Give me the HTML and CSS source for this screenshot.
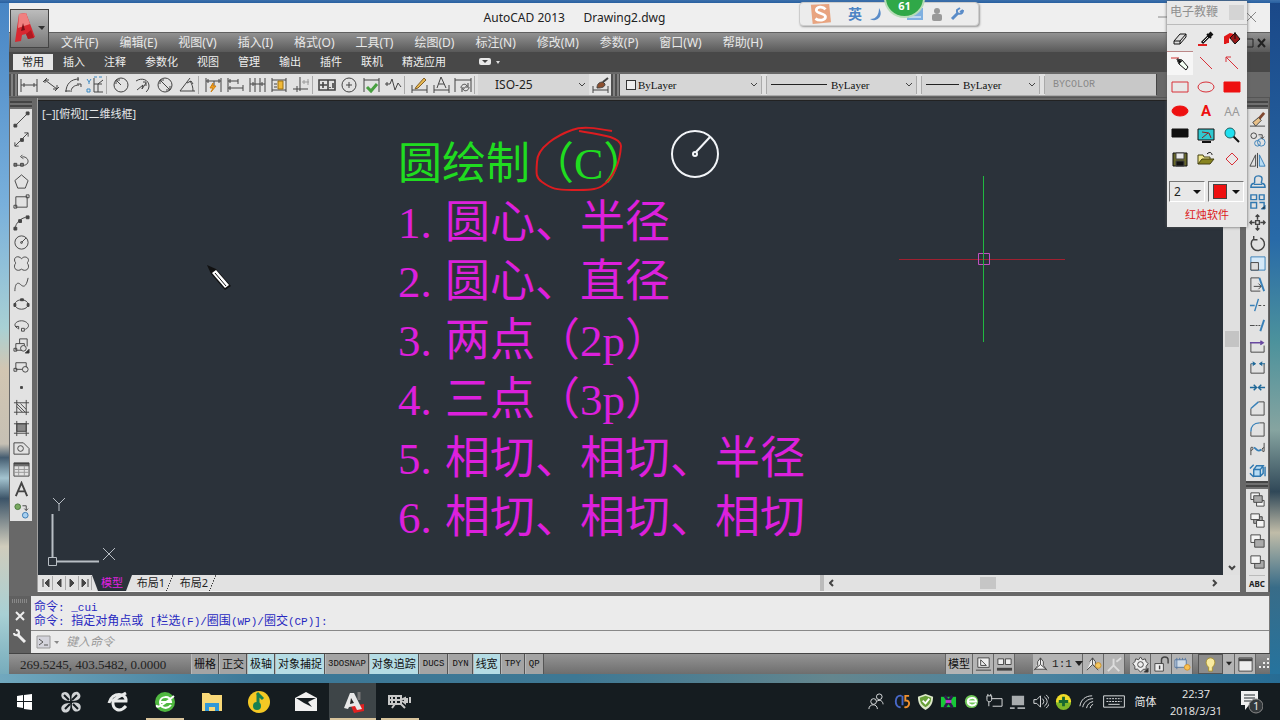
FILE: index.html
```html
<!DOCTYPE html>
<html lang="zh-CN">
<head>
<meta charset="utf-8">
<title>AutoCAD 2013 - Drawing2.dwg</title>
<link rel="stylesheet" href="styles.css">
</head>
<body>
<main class="desktop">
<section class="window">
  <header class="titlebar"><h1>AutoCAD 2013 &nbsp; &nbsp; &nbsp;Drawing2.dwg</h1>
    <div class="winbtns"><button aria-label="最小化"><svg width="12" height="12"><path d="M1 6h10"/></svg></button><button aria-label="关闭"><svg width="12" height="12"><path d="M1 1l10 10M11 1L1 11"/></svg></button></div>
  </header>
  <nav class="menubar" aria-label="菜单">
    <button>文件(F)</button><button>编辑(E)</button><button>视图(V)</button><button>插入(I)</button><button>格式(O)</button><button>工具(T)</button><button>绘图(D)</button><button>标注(N)</button><button>修改(M)</button><button>参数(P)</button><button>窗口(W)</button><button>帮助(H)</button>
    <div class="docbtns"><button aria-label="还原"><svg width="10" height="10"><path d="M1 1h8v8H1z"/></svg></button><button aria-label="关闭文档"><svg width="10" height="10"><path d="M1 1l7 8M8 1L1 9" stroke-width="2"/></svg></button></div>
  </nav>
  <button class="appbtn" aria-label="应用程序菜单"><svg width="37" height="37" viewBox="0 0 37 37"><path d="M8 4l7-1 9 24-7 2-2-5-4 1-1 6-6 1z" fill="#d82830"/><path d="M8 4l7-1 4 11-12 4z" fill="#f08080"/><path d="M12 13l2 7-4 1z" fill="#7c1018"/><path d="M20 20l3 8-6 1-2-5z" fill="#b01820"/><path d="M27 16h7l-3 4z" fill="#333"/></svg></button>
  <nav class="ribbon" aria-label="功能区">
    <button class="on">常用</button><button>插入</button><button>注释</button><button>参数化</button><button>视图</button><button>管理</button><button>输出</button><button>插件</button><button>联机</button><button>精选应用</button>
    <button class="more" aria-label="最小化功能区"><svg width="24" height="10"><rect x="1" y="1" width="12" height="7" rx="2" fill="#e8e8e8"/><path d="M4 3h6l-3 3z" fill="#444"/><path d="M18 4h4l-2 3z" fill="#ddd"/></svg></button>
  </nav>

  <div class="toolrow">
    <div class="grip"></div>
    <div class="bar">
      <button aria-label="线性"><svg viewBox="0 0 18 18"><path d="M1 3v13M17 3v13M1 9h16M4 7v4M14 7v4"/></svg></button>
      <button aria-label="对齐"><svg viewBox="0 0 18 18"><path d="M1 6l4-4M13 15l4-4M3 4l12 9M3 7V4h4M15 9v4h-4"/></svg></button>
      <button aria-label="弧长"><svg viewBox="0 0 18 18"><path d="M2 16C2 8 7 3 15 3M7 16c0-4 3-7 8-7M14 1v4M13 8h4v3M1 15h5"/></svg></button>
      <button aria-label="坐标"><svg viewBox="0 0 18 18"><path d="M8 2v14h9M12 8l5-4M12 8v8M8 8h8"/><path d="M1 3l2 3 2-3M3 6v2M8 1h3M13 1h3M1 13h3v3H1z" stroke="#3b8ac4"/></svg></button>
      <i class="sep"></i>
      <button aria-label="半径"><svg viewBox="0 0 18 18"><circle cx="9" cy="9" r="7"/><path d="M9 9L5 5M4 8V4h4"/></svg></button>
      <button aria-label="折弯"><svg viewBox="0 0 18 18"><path d="M2 5c6-4 13-1 13 5 0 3-2 5-3 6M3 14l6-5-1 4 4-6M9 6h3v4"/></svg></button>
      <button aria-label="直径"><svg viewBox="0 0 18 18"><circle cx="9" cy="9" r="7"/><path d="M4 4l10 10M4 8V4h4M14 10v4h-4"/></svg></button>
      <button aria-label="角度"><svg viewBox="0 0 18 18"><path d="M12 2L2 15h15M12 5c2 3 3 6 3 10M9 7l4-2 2 3"/></svg></button>
      <i class="sep"></i>
      <button aria-label="快速标注"><svg viewBox="0 0 18 18"><path d="M2 2v14M17 2v14M2 5h15M10 5v5M4 3v4M15 3v4"/><path d="M9 7L6 12h3l-2 4 5-6H9z" fill="#f0a020" stroke="#d08010"/></svg></button>
      <button aria-label="基线"><svg viewBox="0 0 18 18"><path d="M2 2v14M12 3v5M2 5h10M2 12h15M17 9v6M4 3v4M4 10v4"/></svg></button>
      <button aria-label="连续"><svg viewBox="0 0 18 18"><path d="M2 2v14M7 2v14M12 2v14M17 2v14M2 8h15M5 6v4M14 6v4"/></svg></button>
      <button aria-label="间距"><svg viewBox="0 0 18 18"><path d="M2 2v14M16 2v14M2 4h14M2 14h14M4 8h3M4 11h3"/><path d="M8 5h5v8H8z" fill="#f0b838" stroke="#9c7010"/></svg></button>
      <button aria-label="打断"><svg viewBox="0 0 18 18"><path d="M8 1v14M1 13h15M5 10v6"/><path d="M10 6h7M16 3v6M12 4v4" stroke="#999"/></svg></button>
      <i class="sep"></i>
      <button aria-label="公差"><svg viewBox="0 0 18 18"><path d="M1 4h16v10H1zM10 4v10M2 9h7M5 6v6M15 7v5M12 11v1" stroke-width="1.6"/></svg></button>
      <button aria-label="圆心标记"><svg viewBox="0 0 18 18"><circle cx="9" cy="9" r="7"/><path d="M6 9h6M9 6v6"/></svg></button>
      <button aria-label="检验"><svg viewBox="0 0 18 18"><path d="M2 2v14M17 2v14M2 4h15"/><path d="M5 11l4 4 6-7" stroke="#48a040" stroke-width="3"/></svg></button>
      <button aria-label="折弯线性"><svg viewBox="0 0 18 18"><path d="M1 8h5l2-5 3 11 3-7 3 4M3 6v4"/></svg></button>
      <i class="sep"></i>
      <button aria-label="编辑标注"><svg viewBox="0 0 18 18"><path d="M2 9v8M17 9v8M2 14h15"/><path d="M6 11l8-9 2 2-8 8-3 1z" fill="#e8b850" stroke="#80602c"/></svg></button>
      <button aria-label="编辑文字"><svg viewBox="0 0 18 18"><path d="M2 9v8M17 9v8M2 14h15M5 12l4-11 5 11M7 8h5"/></svg></button>
      <button aria-label="标注更新"><svg viewBox="0 0 18 18"><path d="M1 2v14M17 2v14M1 4h16M7 12c0-4 5-5 6-2M15 11c0 4-5 5-6 2M14 7v4h-3M8 16v-4h3"/></svg></button>
      <i class="sep"></i>
      <label class="combo style"><select aria-label="标注样式"><option>ISO-25</option></select><svg class="chev" viewBox="0 0 8 6"><path d="M1 1l3 3 3-3"/></svg></label>
      <button aria-label="标注样式管理"><svg viewBox="0 0 18 18"><path d="M2 10v7M17 10v7M2 14h15"/><path d="M6 12c0-4 2-6 6-6l2 2c0 3-3 4-8 4z" fill="#8c5030"/><path d="M12 6l5-4" stroke-width="2"/></svg></button>
    </div>
    <div class="grip"></div>
    <div class="bar props">
      <label class="combo color"><span class="swatch"></span><select aria-label="颜色"><option>ByLayer</option></select><svg class="chev" viewBox="0 0 8 6"><path d="M1 1l3 3 3-3"/></svg></label><i class="sep"></i>
      <label class="combo ltype"><span class="rule"></span><select aria-label="线型"><option>ByLayer</option></select><svg class="chev" viewBox="0 0 8 6"><path d="M1 1l3 3 3-3"/></svg></label><i class="sep"></i>
      <label class="combo lweight"><span class="rule"></span><select aria-label="线宽"><option>ByLayer</option></select><svg class="chev" viewBox="0 0 8 6"><path d="M1 1l3 3 3-3"/></svg></label><i class="sep"></i>
      <label class="combo plot"><select aria-label="打印样式" disabled><option>BYCOLOR</option></select></label>
    </div>
  </div>

  <div class="work">
    <aside class="side">
      <div class="hgrip"></div>
      <div class="vbar draw">
        <button aria-label="直线"><svg viewBox="0 0 18 18"><path d="M3 15L15 3"/><path d="M1 14h3v3H1zM14 1h3v3h-3z" fill="#444"/></svg></button>
        <button aria-label="构造线"><svg viewBox="0 0 18 18"><path d="M2 16L16 2M2 12v4h4M12 2h4v4"/><path d="M8 8h3v3H8z" fill="#444"/></svg></button>
        <button aria-label="多段线"><svg viewBox="0 0 18 18"><path d="M2 14h10c6-1 5-9-2-9M10 3L8 5l3 2"/><path d="M1 12h3v3H1zM8 12h3v3H8z" fill="#777"/></svg></button>
        <button aria-label="正多边形"><svg viewBox="0 0 18 18"><path d="M9 2l7 6-3 8H5L2 8z"/></svg></button>
        <button aria-label="矩形"><svg viewBox="0 0 18 18"><path d="M3 4h12v11H3z"/><path d="M1 13h3v3H1zM14 2h3v3h-3z"/></svg></button>
        <button aria-label="圆弧"><svg viewBox="0 0 18 18"><path d="M2 16C3 9 8 4 16 3"/><path d="M1 14h3v3H1zM6 6h3v3H6zM14 2h3v3h-3z" fill="#444"/></svg></button>
        <button aria-label="圆"><svg viewBox="0 0 18 18"><circle cx="9" cy="9" r="7"/><circle cx="9" cy="9" r="1"/><path d="M9 9l5-5"/></svg></button>
        <button aria-label="修订云线"><svg viewBox="0 0 18 18"><path d="M9 4c3-4 9-1 7 3-1 1-1 2 0 3 2 5-3 8-7 5-4 3-9 0-7-5 1-1 1-2 0-3-2-5 4-7 7-3z"/></svg></button>
        <button aria-label="样条曲线"><svg viewBox="0 0 18 18"><path d="M2 16C2 8 5 6 8 9s6 3 8-7"/></svg></button>
        <button aria-label="椭圆"><svg viewBox="0 0 18 18"><ellipse cx="9" cy="9" rx="7" ry="5"/><path d="M8 3h3v2H8zM1 8h2v3H1zM15 8h2v3h-2z" fill="#444"/></svg></button>
        <button aria-label="椭圆弧"><svg viewBox="0 0 18 18"><path d="M5 12C-1 9 3 4 9 4s11 6 4 9M3 10h3v3M9 12h3v3H9z"/></svg></button>
        <button aria-label="插入块"><svg viewBox="0 0 18 18"><path d="M7 2h8v8M3 7h9v7H3zM7 2v5"/><circle cx="11" cy="12" r="3" fill="#ddd"/><path d="M17 17h-4l4-4z" fill="#222"/><path d="M1 12h3v3H1z"/></svg></button>
        <button aria-label="创建块"><svg viewBox="0 0 18 18"><path d="M3 12V5h11v5M3 12h7"/><circle cx="13" cy="12" r="3"/><path d="M1 11h3v3H1z"/></svg></button>
        <button aria-label="点"><svg viewBox="0 0 18 18"><path d="M8 8h2v2H8z" fill="#444"/></svg></button>
        <button aria-label="图案填充"><svg viewBox="0 0 18 18"><path d="M4 1v16M14 1v16M1 4h16M1 14h16M4 8l6 6M4 5l9 9M8 5l6 6"/></svg></button>
        <button aria-label="渐变色"><svg viewBox="0 0 18 18"><path d="M4 4h10v8H4z" fill="#888"/><path d="M4 1v16M14 1v16M1 4h16M1 14h16"/></svg></button>
        <button aria-label="面域"><svg viewBox="0 0 18 18"><path d="M1 3h10l6 6v6H1z"/><circle cx="8" cy="9" r="3"/></svg></button>
        <button aria-label="表格"><svg viewBox="0 0 18 18"><path d="M1 2h16v14H1zM1 5h16"/><path d="M1 9h16M1 12h16M6 5v11M12 5v11" stroke="#999"/><path d="M1 3h16" stroke-width="2"/></svg></button>
        <button aria-label="多行文字"><svg viewBox="0 0 18 18"><path d="M3 16L9 2l6 14M5 11h8" stroke-width="2"/></svg></button>
        <button aria-label="添加选定对象"><svg viewBox="0 0 18 18"><circle cx="5" cy="5" r="3" fill="#78a860" stroke="#48783c"/><circle cx="13" cy="14" r="3" fill="#a8d0f0" stroke="#3878b0"/><path d="M10 4h4v5M12 7l2 2 2-2"/></svg></button>
      </div>
    </aside>
    <section class="viewport">
      <div class="view">
        <div class="canvas">
          <p class="vlabel">[−][俯视][二维线框]</p>
          <div class="notes"><p class="green">圆绘制（C）</p><p><b>1.</b>圆心、半径</p><p><b>2.</b>圆心、直径</p><p><b>3.</b>两点（2p）</p><p><b>4.</b>三点（3p）</p><p><b>5.</b>相切、相切、半径</p><p><b>6.</b>相切、相切、相切</p></div>
          <svg class="overlay" viewBox="38 101 1186 474" width="1186" height="474">
            <path d="M612 131C595 128 582 126 572 130c-14 5-35 17-35 32-1 12-1 16 5 20 10 7 14 8 30 8s24 0 30-4c12-8 18-24 19-40-1-9-17-11-42-15" fill="none" stroke="#dc1c20" stroke-width="2"/>
            <g fill="none" stroke="#f2f5f8" stroke-width="2"><circle cx="695" cy="154" r="23"/><circle cx="695" cy="154" r="2"/><path d="M696 152l14-15"/></g>
            <path d="M899 259.500h166" stroke="#a02030"/><path d="M978.500 253.500h11v11h-11z" fill="none" stroke="#c050c0"/><path d="M983 176h1v166h-1z" fill="#20b840"/>
            <g fill="none" stroke="#b8bec4"><path d="M52.500 514v43M57 561.500h42" stroke-width="2"/><path d="M48.500 557.500h8v8h-8z"/><path d="M53 498l6 6 6-6M59 504v7M103 548l12 12M115 548l-12 12"/></g>
            <g transform="translate(207 265)"><path d="M0 0l4 9 14 16 6-4L9 4z" fill="#111"/><path d="M5 8l4-3 13 15-4 3z" fill="#fff"/><path d="M8 8l11 13" stroke="#111"/></g>
          </svg>
        </div>
        <div class="vscroll"><i class="vthumb"></i><button aria-label="向下滚动"><svg viewBox="0 0 8 6"><path d="M1 1l3 3 3-3" stroke-width="2"/></svg></button></div>
      </div>
      <div class="sheet">
        <div class="steps"><button aria-label="第一个"><svg viewBox="0 0 10 10"><path d="M2 1v8"/><path d="M8 1L4 5l4 4z" fill="#444"/></svg></button><button aria-label="上一个"><svg viewBox="0 0 10 10"><path d="M7 1L3 5l4 4z" fill="#444"/></svg></button><button aria-label="下一个"><svg viewBox="0 0 10 10"><path d="M3 1l4 4-4 4z" fill="#444"/></svg></button><button aria-label="最后一个"><svg viewBox="0 0 10 10"><path d="M8 1v8"/><path d="M2 1l4 4-4 4z" fill="#444"/></svg></button></div>
        <button class="tab cur">模型</button><button class="tab">布局1</button><button class="tab">布局2</button>
        <div class="hscroll"><button aria-label="向左滚动"><svg viewBox="0 0 6 8"><path d="M4 1L1 4l3 3" stroke-width="2"/></svg></button><i class="hthumb"></i><button aria-label="向右滚动"><svg viewBox="0 0 6 8"><path d="M1 1l3 3-3 3" stroke-width="2"/></svg></button></div>
      </div>
    </section>
    <aside class="side right">
      <div class="hgrip"></div>
      <div class="vbar modify">
        <button aria-label="删除"><svg viewBox="0 0 18 18"><path d="M16 2l-6 7" stroke="#804830" stroke-width="3"/><path d="M10 7l3 3-6 6-3-4z" fill="#e8c088"/><path d="M1 16h16"/></svg></button>
        <button aria-label="复制"><svg viewBox="0 0 18 18"><circle cx="5" cy="5" r="3"/><g stroke="#3880b8"><circle cx="9" cy="13" r="3"/><circle cx="13" cy="12" r="4"/></g><path d="M10 4h4v4M12 6l2 2 2-2"/></svg></button>
        <button aria-label="镜像"><svg viewBox="0 0 18 18"><path d="M7 3v12H1z"/><path d="M11 3v12h6z" fill="#b8dcf4" stroke="#3880b8"/><path d="M9 1v16"/></svg></button>
        <button aria-label="偏移"><svg viewBox="0 0 18 18" class="blue"><path d="M2 15c0-5 3-3 4-5 0-3-1-7 4-7s4 4 3 7c1 2 4 0 4 5zM5 12h9" stroke-width="1.500"/></svg></button>
        <button aria-label="阵列"><svg viewBox="0 0 18 18" class="blue"><path d="M2 2h6v5H2zM11 2h5v5h-5zM2 10h6v6H2zM11 10h5v4" stroke-width="1.500"/><path d="M17 17h-4l4-4z" fill="#222"/></svg></button>
        <button aria-label="移动"><svg viewBox="0 0 18 18"><path d="M9 1v5M9 12v5M1 9h5M12 9h5M7 7h4v4H7zM7 3l2-2 2 2M7 15l2 2 2-2M3 7L1 9l2 2M15 7l2 2-2 2" stroke-width="1.500"/></svg></button>
        <button aria-label="旋转"><svg viewBox="0 0 18 18"><path d="M5 4a7 7 0 1 0 7-1M5 1v4h4" stroke-width="1.500"/></svg></button>
        <button aria-label="缩放"><svg viewBox="0 0 18 18"><path d="M2 2h15v14H2z" fill="#d4e8f8" stroke="#3880b8"/><path d="M2 8h8v8H2z" fill="#ddd"/></svg></button>
        <button aria-label="拉伸"><svg viewBox="0 0 18 18"><path d="M11 2H2v14h10M5 11h8M10 8l3 3-3 3"/><path d="M11 2l5 14" stroke="#3880b8" stroke-width="2"/></svg></button>
        <button aria-label="修剪"><svg viewBox="0 0 18 18"><path d="M1 9h5M10 2L6 15" stroke="#3880b8" stroke-width="1.500"/><path d="M10 9h7" stroke-dasharray="3 2"/></svg></button>
        <button aria-label="延伸"><svg viewBox="0 0 18 18"><path d="M1 9h5"/><path d="M7 9h5" stroke-dasharray="2 1"/><path d="M16 3l-4 12" stroke="#3880b8" stroke-width="2"/></svg></button>
        <button aria-label="打断于点"><svg viewBox="0 0 18 18"><path d="M2 5v10h14V8"/><path d="M1 5h14M12 3l3 2-3 2" stroke="#6848a0" stroke-width="1.500"/></svg></button>
        <button aria-label="打断"><svg viewBox="0 0 18 18"><path d="M2 5v10h14V5"/><path d="M2 5h4M12 5h5M4 3l3 2-3 2M14 3l-3 2 3 2" stroke="#206898" fill="#206898"/></svg></button>
        <button aria-label="合并"><svg viewBox="0 0 18 18"><path d="M1 9h6M11 9h6M5 6l3 3-3 3M13 6l-3 3 3 3" stroke="#206898" stroke-width="1.500"/></svg></button>
        <button aria-label="倒角"><svg viewBox="0 0 18 18"><path d="M2 9v7h14V2h-6"/><path d="M2 9l8-7" stroke="#3880b8" stroke-width="1.500"/></svg></button>
        <button aria-label="圆角"><svg viewBox="0 0 18 18"><path d="M2 11v5h14V2h-5"/><path d="M2 11c0-5 3-9 9-9" stroke="#3880b8" stroke-width="1.500"/></svg></button>
        <button aria-label="光顺曲线"><svg viewBox="0 0 18 18"><path d="M2 15V7c3-2 3 3 0 3M16 2v9c-3 1-3-4 0-4"/><path d="M5 7c3 0 3 6 8 2" stroke="#3880b8" stroke-width="2"/></svg></button>
        <button aria-label="分解"><svg viewBox="0 0 18 18" class="blue"><path d="M5 8h7v7H5zM5 8l3-4h7l-3 4M15 5v7l-3 3M1 7l4-4M1 12l4 4M17 5v10" fill="#b8dcf4" stroke-width="1.500"/></svg></button>
      </div>
      <div class="hgrip"></div>
      <div class="vbar order">
        <button aria-label="前置"><svg viewBox="0 0 18 18"><path d="M2 2h9v7H2zM8 10h8v6H8z" fill="#f4f4f4"/><path d="M5 5h9v7H5z" fill="#aaa"/></svg></button>
        <button aria-label="后置"><svg viewBox="0 0 18 18"><path d="M5 5h9v7H5z" fill="#aaa"/><path d="M2 2h9v6H2zM8 9h8v7H8z" fill="#f4f4f4"/></svg></button>
        <button aria-label="置于对象之上"><svg viewBox="0 0 18 18"><path d="M2 2h10v8H2z" fill="#f4f4f4"/><path d="M6 7h10v8H6z" fill="#aaa"/></svg></button>
        <button aria-label="置于对象之下"><svg viewBox="0 0 18 18"><path d="M6 7h10v8H6z" fill="#aaa"/><path d="M2 2h10v8H2z" fill="#f4f4f4"/></svg></button>
        <button class="abc" aria-label="文字前置">ABC</button>
      </div>
    </aside>
  </div>

  <section class="command">
    <div class="cmdside"><i class="dots"></i><button aria-label="关闭命令行"><svg width="12" height="12"><path d="M2 2l8 8M10 2l-8 8" stroke-width="2"/></svg></button><button aria-label="自定义"><svg width="14" height="14"><path d="M4 5l8 8" stroke-width="3"/><path d="M1 4c0 3 5 3 5 0S4 1 3 1" stroke-width="2"/></svg></button></div>
    <div class="cmdmain">
      <div class="log"><p><b>命令</b>: _cui</p><p><b>命令</b>: <b>指定对角点或</b> [<b>栏选</b>(F)/<b>圈围</b>(WP)/<b>圈交</b>(CP)]:</p></div>
      <label class="entry"><svg width="24" height="14"><path d="M1 1h13v12H1z" fill="#d4d4dc" stroke="#999"/><path d="M3 4l4 3-4 3M8 10h4" stroke="#555" fill="none"/><path d="M18 6h5l-2 3z" fill="#888"/></svg><input type="text" placeholder="键入命令" aria-label="命令"></label>
    </div>
  </section>

  <footer class="status">
    <output>269.5245, 403.5482, 0.0000</output>
    <div class="toggles"><button>栅格</button><button>正交</button><button class="on">极轴</button><button class="on">对象捕捉</button><button class="en">3DOSNAP</button><button class="on">对象追踪</button><button class="en">DUCS</button><button class="en">DYN</button><button class="on">线宽</button><button class="en">TPY</button><button class="en">QP</button></div>
    <div class="statright">
      <button class="mod">模型</button>
      <button aria-label="布局"><svg viewBox="0 0 18 18"><path d="M3 2h12v10H3z" fill="#eee"/><path d="M6 4v6h6zM1 15h16"/></svg></button>
      <button aria-label="快速查看"><svg viewBox="0 0 18 18"><path d="M2 3h6v6H2zM10 3h6v6h-6z" fill="#eee"/><path d="M1 14h16" stroke-width="3"/></svg></button>
      <i class="space"></i>
      <button class="scale"><svg viewBox="0 0 18 18"><path d="M9 2v7l-7 6M9 9l7 6M6 6l3-4 3 4v4l3 4H3l3-4z" fill="#f0f0f0"/></svg>1:1<svg class="tiny" viewBox="0 0 8 6"><path d="M0 0h8L4 5z" fill="#222" stroke="none"/></svg></button>
      <button aria-label="注释可见性"><svg viewBox="0 0 18 18"><path d="M8 2v7l-6 6M8 9l6 6M5 6l3-4 3 4v4" fill="#f0f0f0"/><circle cx="14" cy="10" r="3" fill="#f4c860" stroke="#c89030"/></svg></button>
      <button aria-label="自动添加比例"><svg viewBox="0 0 18 18"><path d="M8 3v7l-6 6M8 10l6 6M11 6l5-4" stroke="#ddd" stroke-width="2"/></svg></button>
      <i class="gap"></i>
      <button aria-label="切换工作空间"><svg viewBox="0 0 18 18"><path d="M9 1l2 3 3-1 1 3 2 2-2 3 0 3-3 0-3 3-3-3-3 0 0-3-2-3 2-2 1-3 3 1z" fill="#eee"/><circle cx="9" cy="9" r="3"/><path d="M17 17h-4l4-4z" fill="#222"/></svg></button>
      <button aria-label="锁定"><svg viewBox="0 0 18 18"><path d="M2 8h9v8H2z" fill="#eee"/><path d="M9 8V4c0-4 7-4 7 0v4M7 10v4" stroke-width="1.500"/></svg></button>
      <button aria-label="硬件加速"><svg viewBox="0 0 18 18"><path d="M1 4h12v8H1zM3 2v12M6 2v2M9 2v2M12 2v2" fill="#d0dce8" stroke="#5878a0"/><circle cx="14" cy="12" r="3" fill="#f8c050" stroke="#d09030"/></svg></button>
      <i class="gap"></i>
      <button class="lamp" aria-label="隔离对象"><svg viewBox="0 0 18 18"><path d="M7 12c-5-5-2-10 2-10s7 5 2 10v4H7z" fill="#f8eaa0" stroke="#a89030"/></svg></button>
      <button class="drop" aria-label="状态栏菜单"><svg class="tiny" viewBox="0 0 8 6"><path d="M0 0h8L4 5z" fill="#222" stroke="none"/></svg></button>
      <button aria-label="全屏"><svg viewBox="0 0 18 18"><path d="M2 2h14v14H2z" fill="#eee"/><path d="M2 4h14" stroke-width="3"/></svg></button>
      <svg class="corner" viewBox="0 0 14 18"><path d="M11 5h2M7 9h2M11 9h2M3 13h2M7 13h2M11 13h2" stroke="#eee" stroke-width="2"/></svg>
    </div>
  </footer>
</section>

<section class="ime" aria-label="输入法"><svg width="26" height="22" viewBox="0 0 26 24"><path d="M3 2l20-1 2 20-20 2z" fill="#e8a480"/><path d="M19 7C16 3 9 4 9 8s10 3 10 7-7 5-11 2" fill="none" stroke="#fff" stroke-width="3"/></svg><button>英</button><button aria-label="半角"><svg width="14" height="14"><path d="M10 1c5 8-2 15-9 11 7 0 9-5 9-11z" fill="#5a8cc8"/></svg></button><button class="kb" aria-label="软键盘"><svg width="18" height="14"><path d="M1 1h16v12H1z" fill="#80b0e0"/><path d="M3 10h12" stroke="#fff"/></svg></button><button aria-label="登录"><svg width="12" height="14"><circle cx="6" cy="4" r="3" fill="#999"/><rect x="1" y="7" width="10" height="7" rx="2" fill="#999"/></svg></button><button aria-label="设置"><svg width="14" height="14"><path d="M2 12l6-6" stroke="#5a8cc8" stroke-width="3"/><path d="M13 3c0 5-7 5-6 0l3-2M13 3l-3 2" fill="none" stroke="#5a8cc8" stroke-width="2"/></svg></button></section>
<div class="score">61</div>

<section class="palette">
  <h2>电子教鞭</h2><i class="pclose"></i>
  <div class="ptools">
    <button aria-label="橡皮"><svg viewBox="0 0 18 18"><path d="M3 11l6-7h6v3l-6 7H3z" fill="#ddd" stroke="#111"/><path d="M3 11h6v3M9 11l6-7" stroke="#111"/></svg></button>
    <button aria-label="吸管"><svg viewBox="0 0 18 18"><path d="M5 13L12 6" stroke="#111" stroke-width="3"/><path d="M6 12l5-5" stroke="#ddd"/><path d="M12 6l3-3" stroke="#111" stroke-width="4"/><path d="M10 4l4 4" stroke="#111" stroke-width="2"/><path d="M1 15h9" stroke="#e02020" stroke-width="2"/></svg></button>
    <button aria-label="填充"><svg viewBox="0 0 18 18"><path d="M2 14V7l5-3 4 1-6 3v5" fill="#e01818" stroke="#e01818" stroke-width="2"/><path d="M7 8l5-5 5 6-5 5z" fill="#981818" stroke="#111"/><path d="M12 2v7" stroke="#111"/></svg></button>
    <button class="sel" aria-label="画笔"><svg viewBox="0 0 18 18"><path d="M0 3h8" stroke="#d03030"/><path d="M6 4l2 5 7 6 2-3-6-7z" fill="#f4fff4" stroke="#111"/><path d="M6 4l2 5 3-3z" fill="#111"/></svg></button>
    <button aria-label="直线"><svg viewBox="0 0 18 18" class="red"><path d="M3 3l12 12"/></svg></button>
    <button aria-label="箭头"><svg viewBox="0 0 18 18" class="red"><path d="M3 3l12 12M3 8V3h5"/></svg></button>
    <button aria-label="矩形"><svg viewBox="0 0 18 18" class="red"><path d="M1 4h16v10H1z"/></svg></button>
    <button aria-label="椭圆"><svg viewBox="0 0 18 18" class="red"><ellipse cx="9" cy="9" rx="8" ry="5"/></svg></button>
    <button aria-label="实心矩形"><svg viewBox="0 0 18 18"><path d="M1 4h16v10H1z" fill="#ee1010" stroke="#ee1010"/></svg></button>
    <button aria-label="实心椭圆"><svg viewBox="0 0 18 18"><ellipse cx="9" cy="9" rx="8" ry="5" fill="#ee1010" stroke="#ee1010"/></svg></button>
    <button class="ltr">A</button>
    <button class="ltr gray">AA</button>
    <button aria-label="黑板"><svg viewBox="0 0 18 18"><path d="M1 3h16v8H1z" fill="#111" stroke="#111"/></svg></button>
    <button aria-label="屏幕"><svg viewBox="0 0 18 18"><path d="M1 3h16v11H1z" fill="#30c8d0" stroke="#111"/><path d="M5 6l7 1 2 5M11 7l-6 5" stroke="#8c2020"/><path d="M5 16h9" stroke="#111" stroke-width="2"/></svg></button>
    <button aria-label="放大镜"><svg viewBox="0 0 18 18"><path d="M10 10l6 6" stroke="#111" stroke-width="2"/><circle cx="7" cy="7" r="5" fill="#20e0f0" stroke="#206060"/></svg></button>
    <button aria-label="保存"><svg viewBox="0 0 18 18"><path d="M2 3h14v13H2z" fill="#686828" stroke="#111"/><path d="M5 3h8v6H5z" fill="#e8e8e8"/><path d="M5 11h8v5H5z" fill="#111"/></svg></button>
    <button aria-label="打开"><svg viewBox="0 0 18 18"><path d="M1 14V5h5l1 2h6v3" fill="#f0e890" stroke="#444010"/><path d="M1 14l4-5h12l-4 5z" fill="#888420" stroke="#444010"/><path d="M10 4c3-3 5-1 5 1" stroke="#111"/></svg></button>
    <button aria-label="菱形"><svg viewBox="0 0 18 18" class="red"><path d="M9 3l6 6-6 6-6-6z"/></svg></button>
  </div>
  <div class="psel">
    <label class="pbox"><select aria-label="线宽"><option>2</option></select><span class="arrow"></span></label>
    <label class="pbox"><span class="redsw"></span><select aria-label="画笔颜色"><option></option></select><span class="arrow"></span></label>
  </div>
  <a href="#">红烛软件</a>
</section>
</main>

<footer class="taskbar">
  <button aria-label="开始"><svg viewBox="0 0 24 24"><path d="M5 6l6-1v6H5zM12 5l8-1v7h-8zM5 12h6v6l-6-1zM12 12h8v8l-8-1z" fill="#fff"/></svg></button>
  <button aria-label="浏览器"><svg viewBox="0 0 24 24"><g fill="#d0d3d5"><path d="M11 11C3 11 1 6 3 3c5-3 9 1 8 8z"/><path d="M13 11c-2-7 2-10 6-9 5 4 2 9-6 9z"/><path d="M13 13c8-2 10 3 8 7-5 4-9 0-8-7z"/><path d="M11 13c2 8-3 11-7 9-4-4-1-9 7-9z"/></g><path d="M5 5l5 5M18 5l-5 5M19 19l-5-5M6 19l5-5" stroke="#151c20" stroke-width="2"/></svg></button>
  <button aria-label="Edge"><svg viewBox="0 0 24 24"><path d="M20 16c-6 7-14 4-13-5h13c1-8-14-10-17 2M6 12c3-4 7-5 14-9" fill="none" stroke="#e8eaea" stroke-width="3"/></svg></button>
  <button class="open" aria-label="360浏览器"><svg viewBox="0 0 24 24"><circle cx="12" cy="12" r="10" fill="#50b840"/><path d="M18 15c-4 5-11 3-11-3s10-7 11 0H8M4 15C2 21 15 11 21 6" fill="none" stroke="#fff" stroke-width="2"/></svg></button>
  <button aria-label="文件资源管理器"><svg viewBox="0 0 24 24"><path d="M2 3h7l2 2h11v16H2z" fill="#f8d878"/><path d="M5 21v-8h14v8h-4v-4H9v4z" fill="#3098d8"/></svg></button>
  <button aria-label="音乐"><svg viewBox="0 0 24 24"><circle cx="12" cy="12" r="11" fill="#f4c824"/><path d="M10 3l6 6M11 4v12" stroke="#188050" stroke-width="3"/><ellipse cx="10" cy="16" rx="4" ry="4" fill="#188050"/></svg></button>
  <button aria-label="邮件"><svg viewBox="0 0 24 24"><path d="M1 8l11-6 11 6v13H1z" fill="#f0f0f0"/><path d="M2 8h20l-8 4 4 5-8-4z" fill="#151c20"/></svg></button>
  <button class="open active" aria-label="AutoCAD"><svg viewBox="0 0 24 24"><path d="M10 16l13-2v7l-10 2z" fill="#e02020"/><path d="M3 18L9 3h4l8 16-5 1-2-4-6 1-1 2z" fill="#e8e8e8"/><path d="M10 8l3 5-4 1z" fill="#222"/><path d="M18 2v8" stroke="#777" stroke-width="3"/></svg></button>
  <button class="open" aria-label="录像"><svg viewBox="0 0 24 24"><path d="M1 6h12v8H1zM4 6v8M8 6v8M1 10h12M13 10l4-2v5zM19 8v5M22 7v6M4 18l3-4h6l4 4" fill="none" stroke="#c8c8c8" stroke-width="2"/></svg></button>
  <div class="tray">
    <button class="wide" aria-label="人脉"><svg viewBox="0 0 18 18"><g class="w"><circle cx="7" cy="9" r="3"/><circle cx="13" cy="4" r="3"/><path d="M2 17c0-6 9-6 9 0M10 9c4-3 7 0 7 3"/></g></svg></button>
    <button aria-label="CJ"><svg viewBox="0 0 18 18"><path d="M8 3C0 1 0 16 7 15M9 3v10" fill="none" stroke="#4868c8" stroke-width="2"/><path d="M16 3h-4v5c6-1 5 8-1 7" fill="none" stroke="#f09030" stroke-width="2"/></svg></button>
    <button aria-label="安全卫士"><svg viewBox="0 0 18 18"><path d="M9 1l8 3c0 6-2 11-8 14C3 15 1 10 1 4z" fill="#dce8c8"/><path d="M9 3l6 2c0 5-2 8-6 10-4-2-6-5-6-10z" fill="#68a038"/><path d="M6 8l3 3 4-5" fill="none" stroke="#fff" stroke-width="2"/></svg></button>
    <button aria-label="显卡"><svg viewBox="0 0 18 18"><path d="M1 4h16v11H1z" fill="#18c838"/><path d="M5 3l4 6-4 6M13 3L9 9l4 6" fill="none" stroke="#301850" stroke-width="3"/><path d="M6 9h6" stroke="#c030d0" stroke-width="3"/></svg></button>
    <button aria-label="浏览器医生"><svg viewBox="0 0 18 18"><circle cx="9" cy="9" r="7" fill="#70c858"/><path d="M14 11c-3 4-9 2-9-2s8-6 9 0H5" fill="none" stroke="#fff" stroke-width="2"/></svg></button>
    <button aria-label="电源"><svg viewBox="0 0 18 18"><g class="w"><path d="M6 6h11v8H7M1 3h5v4c0 3-5 3-5 0zM2 1v2M5 1v2M3 9v5"/></g></svg></button>
    <button aria-label="网络"><svg viewBox="0 0 18 18"><path d="M3 3h13v10H3zM1 15h5v2H1zM9 15h8v2H9z" fill="#a8acae"/></svg></button>
    <button aria-label="音量"><svg viewBox="0 0 18 18"><g class="w"><path d="M2 7h3l4-4v12l-4-4H2zM11 6c2 2 2 4 0 6M13 4c4 3 4 7 0 10M15 2c5 5 5 9 0 14"/></g></svg></button>
    <button aria-label="健康"><svg viewBox="0 0 18 18"><circle cx="9" cy="9" r="8" fill="#f0dc28"/><path d="M1 10a8 8 0 0 0 16 0z" fill="#80b828"/><path d="M9 4v10M4 9h10" stroke="#186830" stroke-width="3"/></svg></button>
    <button aria-label="无线"><svg viewBox="0 0 18 18"><g class="w"><path d="M2 14C3 7 8 3 15 3M5 15c1-5 5-9 11-9M9 16c1-4 3-6 7-7M13 16c0-2 1-3 3-4"/></g></svg></button>
    <button class="wide" aria-label="触摸键盘"><svg width="24" height="18" viewBox="0 0 24 18"><g class="w"><path d="M1 3h22v12H1z"/><path d="M4 6h16M4 9h16" stroke-dasharray="2 1"/><path d="M6 12h12"/></g></svg></button>
    <button class="lang">简体</button>
    <time><span>22:37</span><span>2018/3/31</span></time>
    <button class="note" aria-label="通知"><svg viewBox="0 0 24 24"><path d="M2 1h17v14h-9l-4 5v-5H2z" fill="#f0f0f0"/><path d="M5 5h11M5 8h11M5 11h7" stroke="#20282c" stroke-width="1"/><circle cx="17" cy="16" r="7" fill="#33383b" stroke="#888"/></svg><b>1</b></button>
  </div>
</footer>
</body>
</html>
```
FILE: styles.css
```css
* { box-sizing: border-box; }
html, body { height: 100%; }
body {
  margin: 0;
  display: flex;
  flex-direction: column;
  overflow: hidden;
  font-family: "Noto Sans", "Noto Sans CJK SC", sans-serif;
  font-size: 11px;
  line-height: 16px;
  color: #222;
}
h1, h2, p { margin: 0; font-weight: 400; }
button, select, input {
  appearance: none;
  border: 0;
  padding: 0;
  margin: 0;
  background: none;
  font: inherit;
  color: inherit;
  border-radius: 0;
}
button { display: flex; align-items: center; justify-content: center; white-space: nowrap; }
b { font-weight: 400; }
svg { display: block; flex: none; }
button svg, .chev { fill: none; stroke: #444; }
button svg.blue { stroke: #3078b0; }
button svg.red { stroke: #d83038; }

.desktop {
  flex: 1;
  min-height: 0;
  position: relative;
  display: flex;
  padding: 3px 10px 9px 9px;
  background:
    linear-gradient(90deg, #71a8be, #3c7898 20%, #3e7894 45%, #64868e 65%, #4c84a0 80%, #276c94) bottom / 100% 9px no-repeat,
    linear-gradient(#3c70ac, #2860a0) top / 100% 3px no-repeat,
    linear-gradient(#4684c4, #79b0dc 30%, #a8d0d4 48%, #d2c6b2 54%, #c6c0b4 65%, #445c70 67%, #a4c4d0 70%, #3c5468 73%, #d0ccbc 80%, #a8d0d4 90%, #6fa6b8) left / 9px 100% no-repeat,
    linear-gradient(#1a4888, #286aa8 35%, #4c929c 50%, #86a4a0 63%, #304858 72%, #c0bca8 78%, #386c88 86%, #2474a0) right / 10px 100% no-repeat;
}
.window { flex: 1; min-width: 0; display: flex; flex-direction: column; position: relative; background: #686868; }
.titlebar { height: 29px; flex: none; display: flex; align-items: center; justify-content: center; background: #efefef; position: relative; padding-right: 130px; }
.titlebar h1 { font-size: 12px; color: #222; }
.winbtns { position: absolute; right: 13px; top: 8px; display: flex; gap: 76px; }
.winbtns svg { stroke: #888; }
.menubar { height: 20px; flex: none; display: flex; align-items: center; gap: 21px; padding-left: 52px; background: linear-gradient(#929292, #595959); border-top: 1px solid #606060; color: #e8e8e8; font-size: 12px; }
.docbtns { margin-left: auto; display: flex; gap: 3px; padding-right: 3px; }
.docbtns svg { stroke: #222; }
.appbtn { position: absolute; left: 1px; top: 6px; border: 1px solid #444; background: linear-gradient(#bcbcbc, #787878); }
.appbtn svg { stroke: none; }
.ribbon { height: 20px; flex: none; display: flex; gap: 1px; padding: 2px 4px; background: #484848; color: #eee; }
.ribbon button { padding: 0 9px; }
.ribbon .on { background: #e6e6e6; color: #222; }
.ribbon .more { padding: 0 22px; }
.ribbon .more svg { stroke: none; }

.toolrow { height: 25px; flex: none; display: flex; align-items: flex-start; padding-top: 2px; background: #686868; }
.grip { width: 9px; height: 22px; background: repeating-linear-gradient(90deg, #505050 0 2px, #808080 2px 4px); }
.bar { height: 22px; display: flex; align-items: center; background: #e2e2e2; border-bottom: 1px solid #aaa; }
.bar button { width: 22px; height: 20px; }
.bar svg, .vbar svg, .statright svg { width: 18px; height: 18px; }
.sep { width: 4px; height: 18px; border-left: 1px solid #aaa; }
.combo { position: relative; height: 21px; display: flex; align-items: center; background: #d6d6d6; font-family: "Liberation Serif", serif; }
.combo select { flex: 1; min-width: 0; height: 20px; }
.combo .chev { position: absolute; right: 3px; width: 8px; height: 6px; pointer-events: none; }
.style { width: 111px; padding-left: 17px; font-family: "Noto Sans", sans-serif; font-size: 12px; }
.color { width: 141px; padding-left: 6px; gap: 2px; }
.swatch { width: 10px; height: 10px; border: 1px solid #333; background: #eee; }
.ltype { width: 149px; padding-left: 4px; gap: 4px; }
.lweight { width: 117px; padding-left: 4px; gap: 4px; }
.rule { width: 56px; height: 1px; background: #222; }
.lweight .rule { width: 33px; }
.plot { width: 111px; padding-left: 8px; background: #c8c8c8; }
.plot select { color: #888; opacity: 1; }
.props .combo { font-size: 11px; color: #111; }
.props .plot { font-family: "Liberation Mono", monospace; font-size: 10px; }
.props { border-right: 1px solid #444; }
.props .sep { width: 6px; border-right: 1px solid #aaa; }

.work { flex: 1; min-height: 0; display: flex; padding-bottom: 4px; gap: 5px; border-top: 1px solid #555; }
.side { width: 23px; flex: none; display: flex; flex-direction: column; padding: 3px 0 0 1px; min-height: 0; overflow: hidden; }
.side.right { width: 25px; padding-right: 1px; border-right: 1px solid #555; }
.hgrip { height: 8px; flex: none; background: repeating-linear-gradient(#454545 0 2px, #707070 2px 4px); }
.vbar { background: #e2e2e2; display: flex; flex-direction: column; justify-content: space-around; align-items: center; flex: none; }
.vbar svg { width: 17px; height: 17px; }
.draw { height: 412px; }
.modify { height: 372px; }
.order { flex: 1; justify-content: flex-start; gap: 4px; padding-top: 2px; }
.order .abc { font-size: 8px; line-height: 12px; border-top: 1px solid #bbb; padding-top: 2px; font-weight: 700; }
.viewport { flex: 1; min-width: 0; display: flex; flex-direction: column; border-left: 1px solid #a0a0a0; padding-top: 2px; }
.view { flex: 1; min-height: 0; display: flex; border-top: 1px solid #222; }
.canvas { flex: 1; min-width: 0; position: relative; overflow: hidden; background: #2b323a; }
.overlay { position: absolute; left: 0; top: 0; }
.vlabel { position: absolute; left: 4px; top: 5px; color: #e4e6e8; }
.notes { padding: 34px 0 0 360px; font-family: "Liberation Serif", "Noto Sans CJK SC", serif; font-weight: 300; font-size: 45px; line-height: 59px; color: #dc20dc; white-space: nowrap; }
.notes .green { color: #20dc20; font-size: 44px; }
.notes b { display: inline-block; width: 47px; font-weight: 300; }
.vscroll { width: 17px; background: #e0e0e0; display: flex; flex-direction: column; justify-content: space-between; align-items: center; padding: 230px 0 4px; }
.vthumb { width: 14px; height: 16px; background: #c4c4c4; }
.vscroll svg { width: 8px; height: 6px; }
.sheet { height: 17px; flex: none; display: flex; background: #e2e2e2; border-bottom: 1px solid #f4f4f4; }
.steps { display: flex; padding: 1px 0 1px 2px; }
.steps button { width: 13px; border-right: 1px solid #aaa; }
.steps svg { width: 10px; height: 10px; }
.tab { width: 43px; padding-right: 5px; background: linear-gradient(112deg, transparent 46%, #333 47% 49%, transparent 50%) right / 10px 100% no-repeat; }
.tab.cur { width: 40px; padding: 0; clip-path: polygon(0 0, 100% 0, 85% 100%, 15% 100%); background: #2b323a; color: #e020e0; }
.hscroll { margin-left: auto; width: 420px; border-left: 4px solid #bbb; display: flex; align-items: center; justify-content: space-between; padding: 0 22px 0 5px; }
.hscroll svg { width: 6px; height: 8px; }
.hthumb { width: 16px; height: 12px; background: #c6c6c6; margin-right: 72px; }

.command { height: 57px; flex: none; display: flex; border-right: 1px solid #777; }
.cmdside { width: 22px; flex: none; display: flex; flex-direction: column; align-items: center; gap: 7px; padding-top: 3px; background: #606060; }
.cmdside svg { stroke: #eee; }
.dots { width: 16px; height: 4px; background: repeating-linear-gradient(90deg, #888 0 1px, #606060 1px 2px); }
.cmdmain { flex: 1; background: #ebebeb; display: flex; flex-direction: column; }
.log { height: 35px; padding: 5px 3px 0; color: #2828c0; font-family: "Liberation Mono", "Noto Sans CJK SC", monospace; line-height: 14px; border-bottom: 1px solid #888; }
.log p { height: 14px; white-space: pre; }
.log b { font-size: 12px; }
.entry { flex: 1; display: flex; align-items: center; gap: 6px; padding-left: 5px; }
.entry input { flex: 1; font-size: 12px; font-style: italic; }
.entry input::placeholder { color: #999; opacity: 1; }

.status { height: 21px; flex: none; display: flex; background: linear-gradient(#949494, #6e6e6e); border-top: 1px solid #444; padding-left: 11px; }
.status output { width: 171px; flex: none; font-family: "Liberation Serif", serif; font-size: 13px; line-height: 21px; white-space: nowrap; }
.toggles { display: flex; }
.toggles button { min-width: 16px; padding: 0 2px; border-right: 1px solid #555; background: #a4a4a4; color: #111; border-left: 1px solid #b8b8b8; }
.toggles .en { font-family: "Liberation Mono", monospace; font-size: 9px; }
.toggles .en:nth-child(n+7) { padding: 0 3px; }
.toggles .on { background: #b5dce4; }
.statright { margin-left: auto; display: flex; }
.statright button { width: 21px; background: #b4b4b4; border-right: 1px solid #666; }
.statright svg { width: 17px; height: 17px; }
.statright .mod { width: 28px; border-left: 1px solid #666; color: #111; }
.space { width: 18px; }
.gap { width: 5px; }
.statright .scale { width: 50px; gap: 3px; font-family: "Liberation Mono", monospace; }
.statright .tiny { width: 8px; height: 6px; }
.statright .lamp { width: 25px; background: #8c8c8c; border: 1px solid #555; }
.statright .drop { width: 12px; }
.statright .drop svg { width: 6px; }
.statright .corner { width: 14px; height: 18px; fill: none; }

.ime { position: absolute; left: 799px; top: 2px; height: 24px; padding: 0 14px 0 7px; display: flex; align-items: center; gap: 7px; background: #ececec; border: 1px solid #ccc; border-radius: 4px; box-shadow: 1px 1px 2px #999; }
.ime button:first-of-type { margin-left: 8px; font-size: 14px; font-weight: 700; color: #4c84c4; }
.ime svg { stroke: none; }
.ime .kb { margin-left: 16px; }
.score { position: absolute; left: 884px; top: -22px; width: 41px; height: 40px; border-radius: 50%; background: #30a848; border: 2px solid #b8dcb8; color: #fff; font-weight: 700; padding-top: 18px; text-align: center; }
.palette { position: absolute; right: 33px; top: 1px; width: 80px; height: 226px; background: #e8e8e8; display: flex; flex-direction: column; box-shadow: 0 0 3px #555; }
.palette h2 { height: 24px; padding: 3px; border-bottom: 1px solid #bbb; font-size: 12px; line-height: 16px; color: #909090; }
.pclose { position: absolute; right: 3px; top: 4px; width: 15px; height: 15px; background: #d4d4d4; }
.ptools { display: grid; grid-template-columns: repeat(3, 1fr); grid-auto-rows: 24px; padding: 2px 2px 0 0; }
.ptools svg { width: 18px; height: 18px; }
.ptools .sel { background: #f6f6f6; border-top: 1px solid #b88; }
.ltr { font: 700 15px "Roboto", sans-serif; color: #ee1010; }
.ltr.gray { font: 12px "Noto Sans", sans-serif; color: #999; }
.psel { display: flex; justify-content: space-between; padding: 10px 3px 0 2px; }
.pbox { position: relative; width: 36px; height: 21px; border: 1px solid #777; border-right-color: #fff; border-bottom-color: #fff; padding: 2px 14px 2px 4px; display: flex; align-items: center; font-size: 12px; }
.pbox select { width: 100%; min-width: 0; }
.redsw { width: 14px; height: 15px; flex: none; background: #ee1010; border: 1px solid #444; }
.arrow { position: absolute; right: 3px; top: 8px; border: 4px solid transparent; border-top-color: #111; }
.palette a { margin-top: 5px; text-align: center; text-decoration: none; color: #dc2020; }

.taskbar { height: 37px; flex: none; display: flex; background: #151c20; color: #e8e8e8; }
.taskbar > button { width: 47px; }
.taskbar > button svg { width: 24px; height: 24px; stroke: none; }
.taskbar .open { background: linear-gradient(#d8c49c, #d8c49c) bottom / 38px 2px no-repeat; }
.taskbar > .active { background-color: #3e4548; background-size: 46px 2px; }
.tray { margin-left: auto; display: flex; align-items: center; padding-right: 9px; }
.tray button { width: 23px; }
.tray button svg { width: 17px; height: 17px; stroke: none; }
.tray .wide { width: 32px; }
.tray .wide svg[width] { width: 24px; }
.w { stroke: #e0e2e3; fill: none; }
.tray .lang { width: 31px; font-size: 11px; }
.tray time { width: 70px; display: flex; flex-direction: column; align-items: center; line-height: 17px; font-family: "Open Sans", sans-serif; }
.tray .note { position: relative; width: 40px; height: 28px; }
.tray .note svg { width: 24px; height: 24px; }
.note b { position: absolute; left: 22px; top: 10px; }
```
